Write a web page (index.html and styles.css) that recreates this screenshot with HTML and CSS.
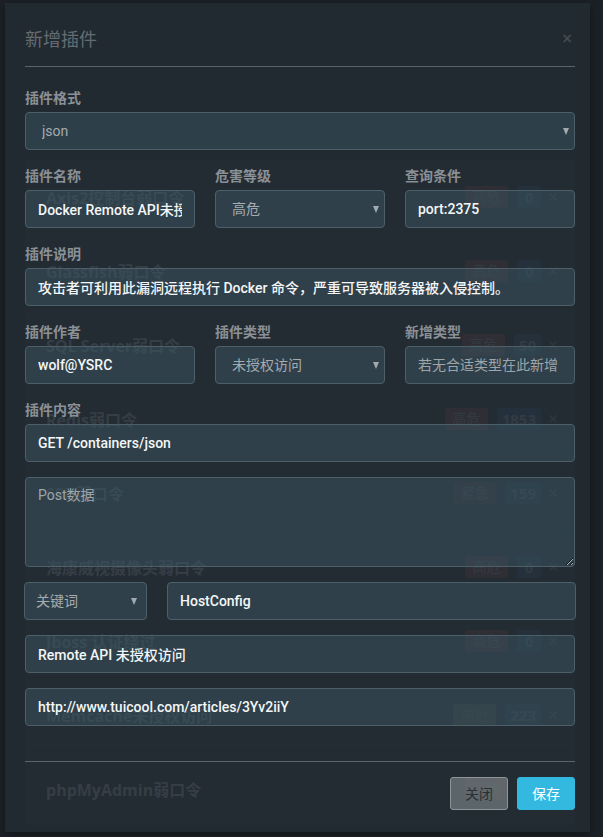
FILE: index.html
```html
<!DOCTYPE html>
<html lang="zh-CN">
<head>
<meta charset="utf-8">
<title>新增插件</title>
<link rel="stylesheet" href="styles.css">
</head>
<body>
<main class="page">
  <ul class="plugin-list">
    <li class="plugin-row"><span class="plugin-name">Axis2控制台弱口令</span><span class="badges"><span class="badge danger">高危</span><span class="badge count">0</span><span class="remove">×</span></span></li>
    <li class="plugin-row"><span class="plugin-name">Glassfish弱口令</span><span class="badges"><span class="badge danger">高危</span><span class="badge count">0</span><span class="remove">×</span></span></li>
    <li class="plugin-row"><span class="plugin-name">SQL Server弱口令</span><span class="badges"><span class="badge danger">高危</span><span class="badge count">50</span><span class="remove">×</span></span></li>
    <li class="plugin-row"><span class="plugin-name">Redis弱口令</span><span class="badges"><span class="badge danger">高危</span><span class="badge count">1853</span><span class="remove">×</span></span></li>
    <li class="plugin-row"><span class="plugin-name">SSH弱口令</span><span class="badges"><span class="badge urgent">紧急</span><span class="badge count">159</span><span class="remove">×</span></span></li>
    <li class="plugin-row"><span class="plugin-name">海康威视摄像头弱口令</span><span class="badges"><span class="badge danger">高危</span><span class="badge count">0</span><span class="remove">×</span></span></li>
    <li class="plugin-row"><span class="plugin-name">Jboss 认证绕过</span><span class="badges"><span class="badge danger">高危</span><span class="badge count">0</span><span class="remove">×</span></span></li>
    <li class="plugin-row"><span class="plugin-name">Memcache未授权访问</span><span class="badges"><span class="badge medium">中危</span><span class="badge count">223</span><span class="remove">×</span></span></li>
    <li class="plugin-row"><span class="plugin-name">phpMyAdmin弱口令</span><span class="badges"><span class="badge danger">高危</span><span class="badge count">0</span><span class="remove">×</span></span></li>
  </ul>
</main>

<div class="modal">
  <div class="modal-header">
    <h4 class="modal-title">新增插件</h4>
    <button type="button" class="close">×</button>
  </div>
  <form class="modal-body">
    <div class="form-group">
      <label>插件格式</label>
      <div class="select-wrap"><select class="form-control select"><option>json</option></select></div>
    </div>
    <div class="grid-3">
      <div class="form-group">
        <label>插件名称</label>
        <input class="form-control" value="Docker Remote API未授权访问">
      </div>
      <div class="form-group">
        <label>危害等级</label>
        <div class="select-wrap"><select class="form-control select"><option>高危</option></select></div>
      </div>
      <div class="form-group">
        <label>查询条件</label>
        <input class="form-control" value="port:2375">
      </div>
    </div>
    <div class="form-group">
      <label>插件说明</label>
      <input class="form-control" value="攻击者可利用此漏洞远程执行 Docker 命令，严重可导致服务器被入侵控制。">
    </div>
    <div class="grid-3">
      <div class="form-group">
        <label>插件作者</label>
        <input class="form-control" value="wolf@YSRC">
      </div>
      <div class="form-group">
        <label>插件类型</label>
        <div class="select-wrap"><select class="form-control select"><option>未授权访问</option></select></div>
      </div>
      <div class="form-group">
        <label>新增类型</label>
        <input class="form-control" placeholder="若无合适类型在此新增">
      </div>
    </div>
    <div class="form-group">
      <label>插件内容</label>
      <input class="form-control" value="GET /containers/json">
    </div>
    <div class="form-group">
      <textarea class="form-control textarea" placeholder="Post数据"></textarea>
    </div>
    <div class="form-group keyword-row">
      <div class="select-wrap small"><select class="form-control select kw"><option>关键词</option></select></div>
      <input class="form-control" value="HostConfig">
    </div>
    <div class="form-group">
      <input class="form-control" value="Remote API 未授权访问">
    </div>
    <div class="form-group">
      <input class="form-control" value="http://www.tuicool.com/articles/3Yv2iiY">
    </div>
  </form>
  <div class="modal-footer">
    <button type="button" class="btn btn-default">关闭</button>
    <button type="button" class="btn btn-primary">保存</button>
  </div>
</div>
</body>
</html>
```

FILE: styles.css
```css
* { box-sizing: border-box; }

html, body {
  margin: 0;
  padding: 0;
}

body {
  width: 603px;
  height: 837px;
  overflow: hidden;
  position: relative;
  background: #1b2127;
  font-family: Roboto, "Noto Sans CJK SC", sans-serif;
  font-size: 14px;
}

/* underlying page list */
.page {
  padding: 160px 28px 0 25px;
}

.plugin-list {
  list-style: none;
  margin: 0;
  padding: 0;
}

.plugin-row {
  height: 74px;
  display: flex;
  align-items: center;
  padding: 0 17px 0 21px;
  background: #252d34;
  border-bottom: 1px solid #1b2127;
}

.plugin-name {
  flex: 1;
  font-family: "Open Sans", "Noto Sans CJK SC", sans-serif;
  font-weight: 700;
  font-size: 16px;
  color: #a3abb2;
}

.badges {
  display: flex;
  align-items: center;
  gap: 9px;
}

.badge {
  height: 22px;
  line-height: 22px;
  padding: 0 5px;
  border-radius: 3px;
  font-size: 14px;
  text-align: center;
  white-space: nowrap;
  color: #8f969b;
}

.badge.danger { background: #80443f; min-width: 43px; }
.badge.urgent { background: #733c39; min-width: 43px; }
.badge.medium { background: #74743c; min-width: 43px; }
.badge.count {
  background: #2b4f70;
  min-width: 24px;
  font-weight: 700;
  font-family: "Open Sans", sans-serif;
  font-size: 15px;
}

.remove {
  font-size: 18px;
  color: #6a737a;
  width: 10px;
  margin-left: -2px;
  text-align: center;
}

/* modal */
.modal {
  position: absolute;
  top: 3px;
  left: 5px;
  width: 585px;
  background: rgba(35, 43, 51, 0.86);
  box-shadow: 0 3px 9px rgba(0, 0, 0, 0.35);
}

.modal-header {
  margin: 0 15px 0 20px;
  padding: 22px 0 15px;
  border-bottom: 1px solid #5c6469;
  display: flex;
  align-items: center;
  justify-content: space-between;
}

.modal-title {
  margin: 0;
  font-family: "Noto Sans CJK SC", sans-serif;
  font-weight: 400;
  font-size: 18px;
  line-height: 26px;
  color: #646c72;
}

.close {
  border: 0;
  background: none;
  padding: 0;
  margin-right: 2px;
  font-family: "DejaVu Sans", sans-serif;
  font-size: 14px;
  line-height: 26px;
  color: #424a50;
  font-weight: 700;
}

.modal-body {
  padding: 20px 15px 20px 20px;
  margin: 0;
}

.form-group {
  margin-bottom: 15px;
}

.form-group label {
  display: block;
  height: 20px;
  margin-bottom: 5px;
  font-family: "Noto Sans CJK SC", sans-serif;
  font-weight: 700;
  font-size: 14px;
  line-height: 20px;
  color: #8a9095;
}

.grid-3 {
  display: grid;
  grid-template-columns: repeat(3, 1fr);
  gap: 20px;
}

.form-control {
  display: block;
  width: 100%;
  height: 38px;
  padding: 0 12px;
  border: 1px solid #4d5f69;
  border-radius: 4px;
  background: rgba(62, 90, 102, 0.46);
  color: #f4f6f7;
  font-family: Roboto, "Noto Sans CJK SC", sans-serif;
  font-weight: 500;
  font-size: 14px;
  outline: none;
}

.form-control::placeholder {
  color: #9ea5aa;
  font-weight: 400;
}

.select-wrap {
  position: relative;
}

.select-wrap::after {
  content: "";
  position: absolute;
  right: 6px;
  top: 16px;
  border-left: 3.5px solid transparent;
  border-right: 3.5px solid transparent;
  border-top: 7px solid #a3aaaf;
  pointer-events: none;
}

.select {
  appearance: none;
  -webkit-appearance: none;
  padding-left: 16px;
  color: #a5acb1;
  font-weight: 400;
}

.textarea {
  height: 90px;
  padding: 7px 12px;
  line-height: 20px;
  resize: vertical;
}

.keyword-row {
  display: grid;
  grid-template-columns: 123px 1fr;
  gap: 20px;
  margin-left: -1px;
  margin-right: -1px;
}

.select.kw {
  padding-left: 11px;
}

.select-wrap.small::after {
  right: 10px;
}

.modal-footer {
  margin: 0 15px 0 20px;
  padding: 15px 0 22px;
  border-top: 1px solid #5c6469;
  display: flex;
  justify-content: flex-end;
  gap: 9px;
}

.btn {
  height: 33px;
  padding: 0 14px;
  border-radius: 3px;
  font-family: "Noto Sans CJK SC", sans-serif;
  font-size: 14px;
  line-height: 31px;
}

.btn-default {
  background: rgba(115, 125, 128, 0.72);
  border: 1px solid #8c969a;
  color: #2a3136;
}

.btn-primary {
  background: #33b8e0;
  border: 1px solid #33b8e0;
  color: #ffffff;
}
```
